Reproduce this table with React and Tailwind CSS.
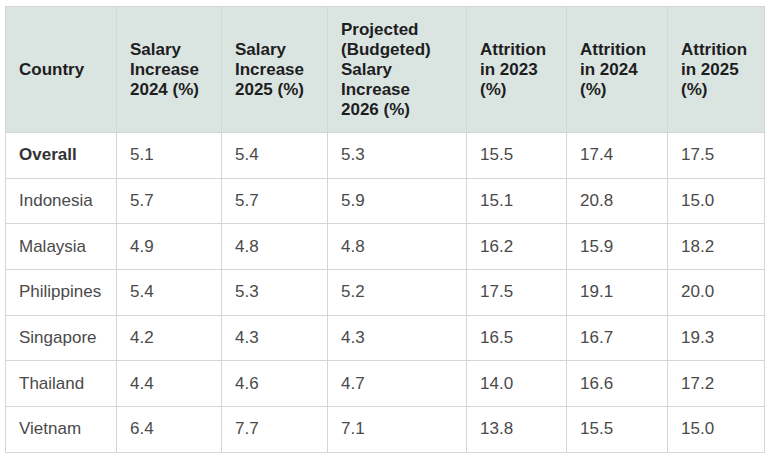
import React from "react";

const headers = [
  ["Country"],
  ["Salary", "Increase", "2024 (%)"],
  ["Salary", "Increase", "2025 (%)"],
  ["Projected", "(Budgeted)", "Salary", "Increase", "2026 (%)"],
  ["Attrition", "in 2023", "(%)"],
  ["Attrition", "in 2024", "(%)"],
  ["Attrition", "in 2025", "(%)"],
];

const rows = [
  ["Overall", "5.1", "5.4", "5.3", "15.5", "17.4", "17.5"],
  ["Indonesia", "5.7", "5.7", "5.9", "15.1", "20.8", "15.0"],
  ["Malaysia", "4.9", "4.8", "4.8", "16.2", "15.9", "18.2"],
  ["Philippines", "5.4", "5.3", "5.2", "17.5", "19.1", "20.0"],
  ["Singapore", "4.2", "4.3", "4.3", "16.5", "16.7", "19.3"],
  ["Thailand", "4.4", "4.6", "4.7", "14.0", "16.6", "17.2"],
  ["Vietnam", "6.4", "7.7", "7.1", "13.8", "15.5", "15.0"],
];

const widths = ["w-[111px]", "w-[105px]", "w-[106px]", "w-[139px]", "w-[100px]", "w-[101px]", "w-[97px]"];

export default function App() {
  return (
    <div className="w-[768px] h-[455px] bg-white pt-[6px] pl-[5px]" style={{ fontFamily: '"Liberation Sans", Arial, sans-serif' }}>
      <table className="table-fixed border-collapse w-[759px] text-[17px] leading-[20px]">
        <colgroup>
          {widths.map((w, i) => (
            <col key={i} className={w} />
          ))}
        </colgroup>
        <thead>
          <tr className="h-[126px] bg-[#dae5e2]">
            {headers.map((h, i) => (
              <th key={i} className="border border-[#d4d6d5] text-left align-middle font-bold text-[#1e1e1e] pl-[13px] pr-[4px] whitespace-nowrap">
                {h.map((line, li) => (
                  <div key={li}>{line}</div>
                ))}
              </th>
            ))}
          </tr>
        </thead>
        <tbody>
          {rows.map((r, ri) => (
            <tr key={ri} className="h-[45.7px]">
              {r.map((c, ci) => (
                <td
                  key={ci}
                  className={
                    "border border-[#d6d6d6] pl-[13px] align-middle " +
                    (ci === 0 && ri === 0 ? "font-bold text-[#333]" : "text-[#4a4a4a]")
                  }
                >
                  {c}
                </td>
              ))}
            </tr>
          ))}
        </tbody>
      </table>
    </div>
  );
}
